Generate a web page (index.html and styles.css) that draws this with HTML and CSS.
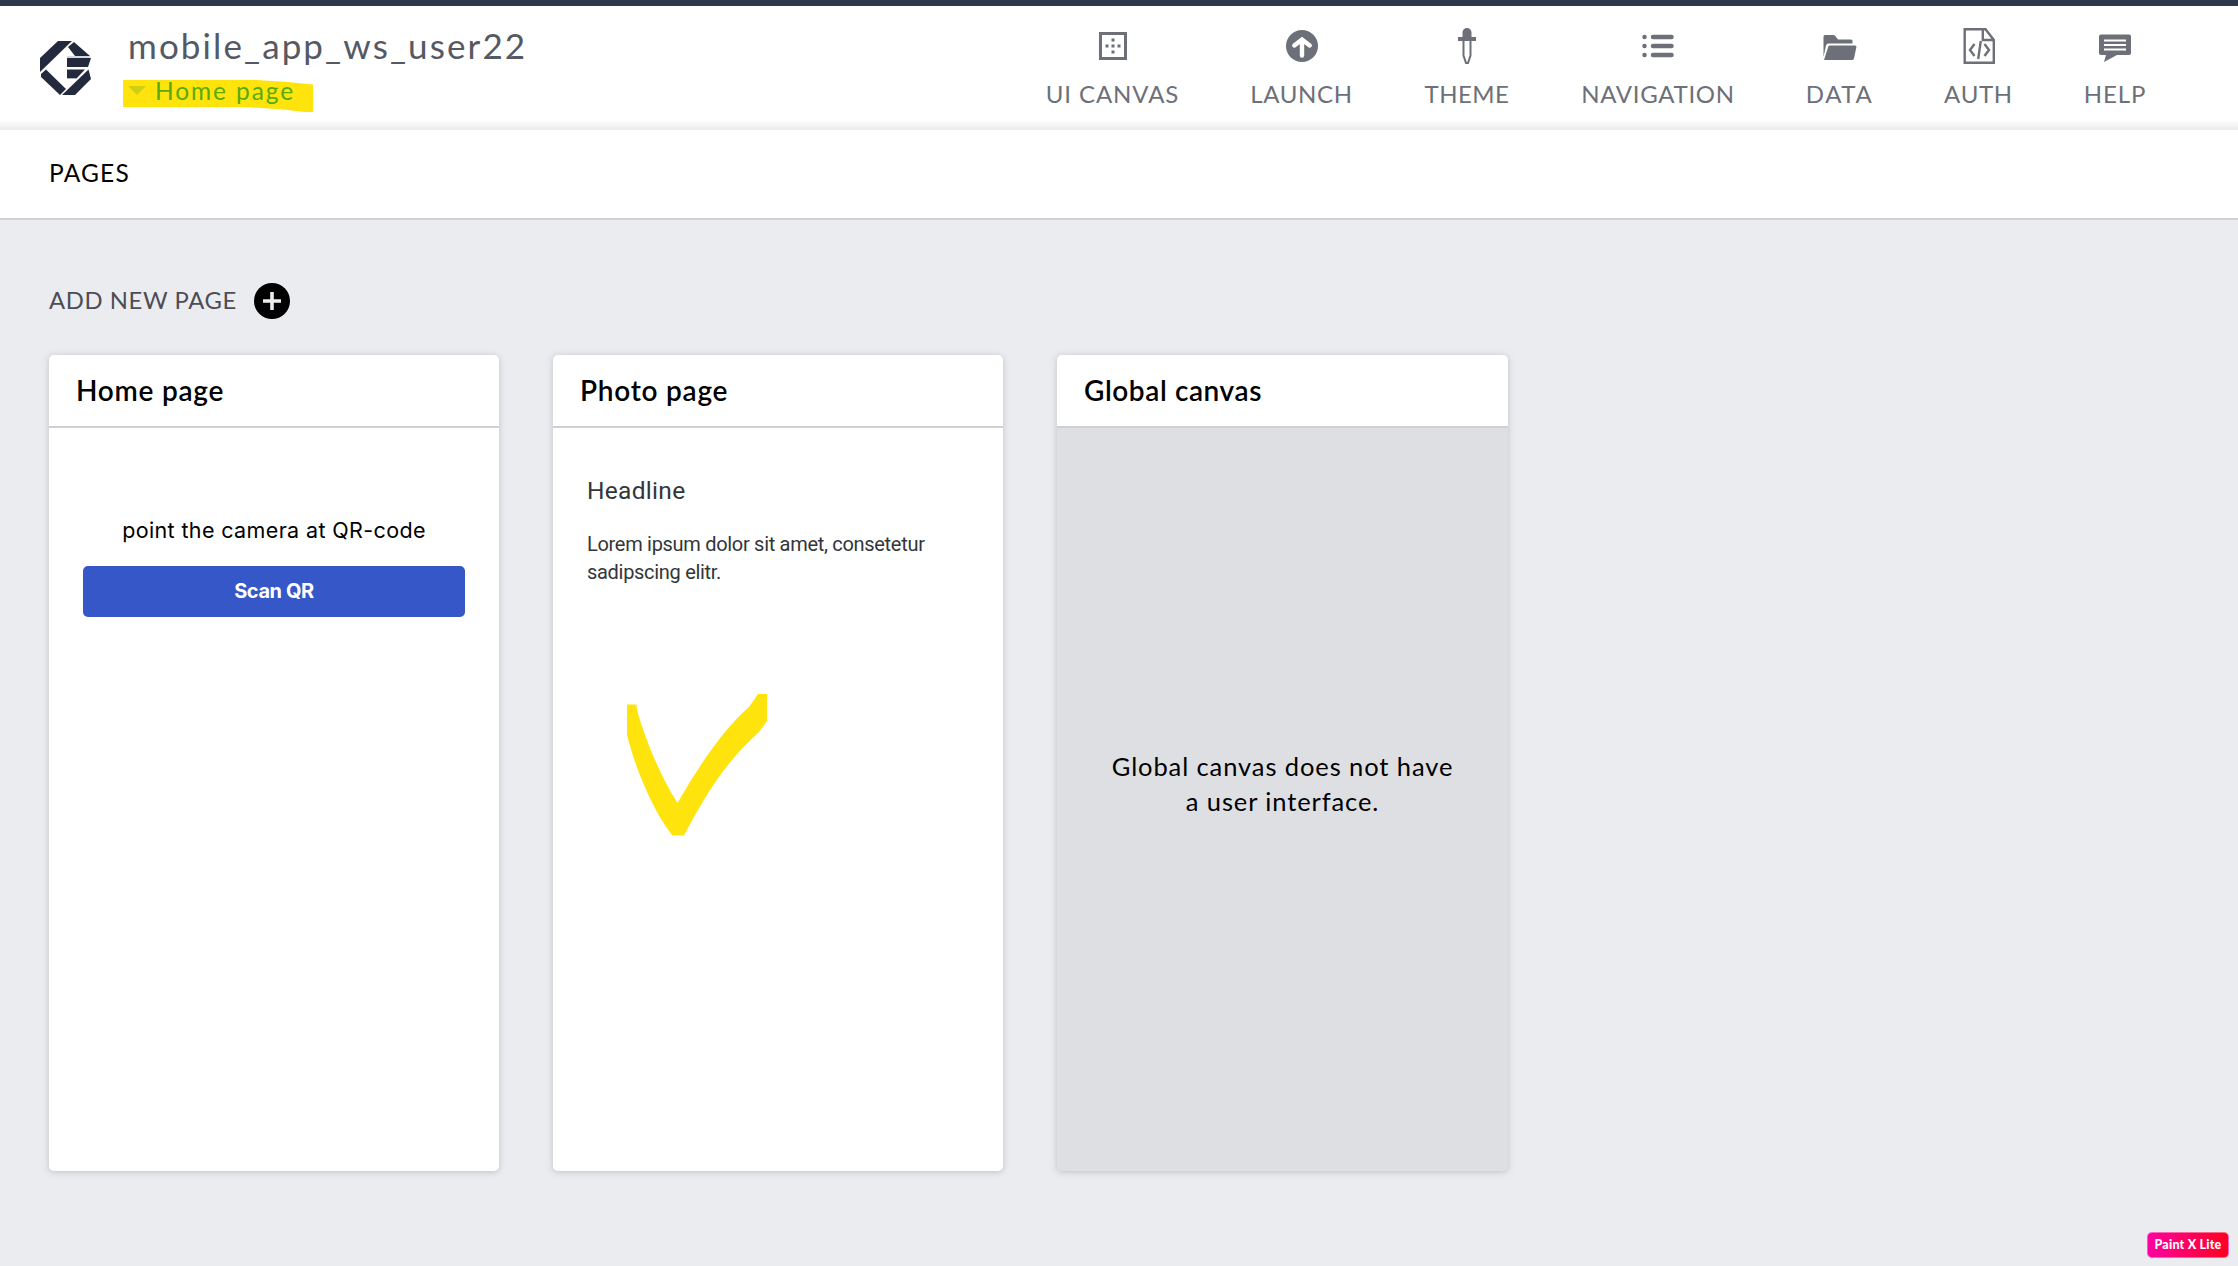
FILE: index.html
```html
<!DOCTYPE html>
<html lang="en">
<head>
<meta charset="utf-8">
<title>mobile_app_ws_user22</title>
<link rel="stylesheet" href="styles.css">
</head>
<body>
<header class="topbar">
  <svg class="logo" viewBox="0 0 51 54" width="51" height="54">
    <g fill="#232a3d">
      <path d="M18 0H32L0 31V17Z"/>
      <path d="M34 1L50 15H35L28 6Z"/>
      <path d="M27 17H51L48 26H27Z"/>
      <path d="M27 28.500H45L37 37H27Z"/>
      <path d="M48.500 28.500L51 38L35 54H22Z"/>
      <path d="M6 28.500L26 48L20 54L1 36V33Z"/>
    </g>
    <path d="M27 16H50M27 37.500H37" stroke="#aeb4b8" stroke-width="1"/>
  </svg>
  <div class="identity">
    <div class="app-name">mobile_app_ws_user22</div>
    <div class="crumb">
      <svg class="marker" viewBox="0 0 190 32" width="190" height="32"><path fill="#ffe30d" d="M0 0H133Q162 1 190 4.500V32H182L160 29.500L122 27H0Z"/></svg>
      <svg class="caret" viewBox="0 0 18 9" width="18" height="9"><path fill="#d0cf12" d="M0 0H18L9 9Z"/></svg>
      <span class="crumb-text">Home page</span>
    </div>
  </div>
  <nav class="menu">
    <a class="item canvas"><svg width="36" height="36" viewBox="0 0 36 36"><path fill="none" stroke="#6d7079" stroke-width="3" d="M5.500 5.500H30.500V30.500H5.500Z"/><path fill="#6d7079" d="M16.500 10.500h3v3h-3zM16.500 16.500h3v3h-3zM16.500 22.500h3v3h-3zM10.500 16.500h3v3h-3zM22.500 16.500h3v3h-3z"/></svg><span>UI CANVAS</span></a>
    <a class="item launch"><svg width="36" height="36" viewBox="0 0 36 36"><circle cx="18" cy="18" r="16" fill="#6d7079"/><path fill="none" stroke="#fff" stroke-width="4.400" stroke-linecap="round" d="M18 27.500V13M10.300 17.500L18 11.500L25.700 17.500"/></svg><span>LAUNCH</span></a>
    <a class="item theme"><svg width="36" height="36" viewBox="0 0 36 36"><path fill="#6d7079" d="M13.500 9V4.500a4.500 4.500 0 0 1 9 0V9H27v4H9V9Z"/><path fill="none" stroke="#6d7079" stroke-width="2" d="M14.500 12V27.500L17 35H19L21.500 27.500V12"/></svg><span>THEME</span></a>
    <a class="item navigation"><svg width="36" height="36" viewBox="0 0 36 36"><path stroke="#6d7079" stroke-width="4.500" stroke-linecap="round" d="M13 9H31.500M13 18H31.500M13 27H31.500M4.500 9h.01M4.500 18h.01M4.500 27h.01"/></svg><span>NAVIGATION</span></a>
    <a class="item data"><svg width="36" height="36" viewBox="0 0 36 36"><path fill="#6d7079" d="M1.500 29V8.500Q1.500 7 3 7H11.500Q13 7 13.700 8.500L16 11.500H29Q30.500 11.500 30.500 13V15.500H6.500Q4.500 15.500 4 17.500Z"/><path fill="#6d7079" d="M6.500 18Q7 17.500 8 17.500H33Q34.800 17.500 34.400 19L32 30.500Q31.500 32 30 32H2Z"/></svg><span>DATA</span></a>
    <a class="item auth"><svg width="36" height="36" viewBox="0 0 36 36"><path fill="none" stroke="#6d7079" stroke-width="2.400" d="M3.700 1.200H24.500L32.800 12V34.800H3.700ZM21.800 1.200V12H32.800"/><path fill="none" stroke="#6d7079" stroke-width="2.400" d="M13.500 16L9 22L13.500 28M23.500 16L28 22L23.500 28M19.800 13L17.200 31"/></svg><span>AUTH</span></a>
    <a class="item help"><svg width="36" height="36" viewBox="0 0 36 36"><path fill="#6d7079" d="M4 6.500H32Q34 6.500 34 8.500V25Q34 27 32 27H20L7 34L9 27H4Q2 27 2 25V8.500Q2 6.500 4 6.500Z"/><path stroke="#fff" stroke-width="2" d="M7 12.500H29M7 17H29M7 21.500H29"/></svg><span>HELP</span></a>
  </nav>
</header>
<div class="section">PAGES</div>
<main class="content">
  <div class="add"><span>ADD NEW PAGE</span>
    <svg width="36" height="36" viewBox="0 0 36 36"><circle cx="18" cy="18" r="18"/><path stroke="#ebecf0" stroke-width="3.600" d="M18 9V27M9 18H27"/></svg>
  </div>
  <div class="cards">
    <section class="card">
      <h2 class="card-title">Home page</h2>
      <div class="preview">
        <p class="prompt">point the camera at QR-code</p>
        <div class="button">Scan QR</div>
      </div>
    </section>
    <section class="card">
      <h2 class="card-title">Photo page</h2>
      <div class="preview">
        <p class="headline">Headline</p>
        <p class="lorem">Lorem ipsum dolor sit amet, consetetur<br>sadipscing elitr.</p>
        <svg class="tick" viewBox="0 0 140 142" width="140" height="142"><path fill="#ffe30d" d="M0 10.500H9.500L10 16C18 44 32 80 50.500 109C72 72 94 38 122 13L131 0H140V27L132 38C102 65 82 94 57 141.500H45.500C28 120 10 80 0 41Z"/></svg>
      </div>
    </section>
    <section class="card global">
      <h2 class="card-title">Global canvas</h2>
      <div class="empty">Global canvas does not have<br>a user interface.</div>
    </section>
  </div>
</main>
<div class="badge">Paint X Lite</div>
</body>
</html>
```
FILE: styles.css
```css
* { box-sizing: border-box; }
body {
  margin: 0;
  height: 1266px;
  overflow: hidden;
  display: flex;
  flex-direction: column;
  background: #ebecf0;
  color: #000;
  font-family: Lato, "Open Sans", sans-serif;
}
p, h2 { margin: 0; }
svg { display: block; flex: none; }

.topbar {
  display: flex;
  align-items: flex-start;
  height: 130px;
  border-top: 6px solid #2e384b;
  background: linear-gradient(#fff 114px, #ebebeb 124px);
}
.logo { margin: 35px 0 0 40px; }
.identity { margin: 19px 0 0 37px; }
.app-name { font-size: 35px; line-height: 41px; letter-spacing: 2.1px; color: #555963; }
.crumb {
  position: relative;
  display: flex;
  align-items: center;
  gap: 9px;
  margin-top: 9px;
  font-size: 24.5px;
  line-height: 31px;
  letter-spacing: 1.9px;
  color: #58ab0a;
}
.marker { position: absolute; left: -5px; top: 5px; }
.caret { position: relative; }
.crumb-text { position: relative; }

.menu { display: flex; gap: 71px; margin: 22px 92px 0 auto; }
.item {
  display: flex;
  flex-direction: column;
  align-items: center;
  gap: 15px;
  font-size: 24px;
  line-height: 30px;
  white-space: nowrap;
  color: #6d7079;
}
.canvas { width: 133px; letter-spacing: 0.9px; }
.launch { width: 103px; letter-spacing: 0.7px; }
.theme { width: 86px; letter-spacing: 0.5px; }
.navigation { width: 154px; letter-spacing: 0.7px; }
.data { width: 67px; letter-spacing: 1.6px; }
.auth { width: 69px; letter-spacing: 0.7px; }
.help { width: 62px; letter-spacing: 0.9px; }

.section {
  height: 90px;
  padding: 28px 0 0 49px;
  border-bottom: 2px solid #cfcfd4;
  background: #fff;
  font-size: 24.5px;
  line-height: 30px;
  letter-spacing: 1.2px;
}

.content { padding: 63px 0 0 49px; }
.add { display: flex; gap: 17px; font-size: 23.8px; line-height: 34px; letter-spacing: 0.6px; color: #4d4d55; }
.cards { display: flex; gap: 54px; margin-top: 36px; }
.card {
  display: flex;
  flex-direction: column;
  width: 450px;
  height: 816px;
  border-radius: 5px;
  overflow: hidden;
  background: #fff;
  box-shadow: 0 1px 6px rgba(60, 64, 80, 0.25);
}
.card-title {
  height: 73px;
  padding-left: 27px;
  border-bottom: 2px solid #cfd0d6;
  font-size: 28px;
  font-weight: 600;
  line-height: 71px;
  letter-spacing: 0.75px;
}
.preview { padding: 0 34px; }
.prompt {
  margin-top: 87px;
  text-align: center;
  font-family: Inter, sans-serif;
  font-size: 21.5px;
  line-height: 30px;
  letter-spacing: 0.37px;
}
.button {
  height: 51px;
  margin-top: 21px;
  border-radius: 5px;
  background: #3557c7;
  color: #fff;
  text-align: center;
  font-family: Inter, sans-serif;
  font-size: 20px;
  font-weight: 700;
  line-height: 50px;
  letter-spacing: -0.4px;
}
.headline { margin-top: 48px; font-family: Roboto, sans-serif; font-size: 24.5px; line-height: 30px; letter-spacing: 0.3px; color: #32363a; }
.lorem { margin-top: 24px; font-family: Roboto, sans-serif; font-size: 20px; line-height: 28px; letter-spacing: -0.3px; color: #32363a; }
.tick { margin: 108px 0 0 40px; }
.global { width: 451px; background: #dedfe3; }
.global .card-title { background: #fff; letter-spacing: 0.6px; }
.empty { padding-top: 321px; text-align: center; font-size: 25.5px; line-height: 35px; letter-spacing: 0.9px; }

.badge {
  position: absolute;
  left: 2147px;
  top: 1232px;
  width: 82px;
  height: 26px;
  border: 1px solid rgba(255, 255, 255, 0.4);
  border-radius: 5px;
  background: linear-gradient(90deg, #ff00a0, #ff0020);
  color: #fff;
  text-align: center;
  font-size: 12.5px;
  font-weight: 900;
  line-height: 23px;
  letter-spacing: 0.2px;
}
```
